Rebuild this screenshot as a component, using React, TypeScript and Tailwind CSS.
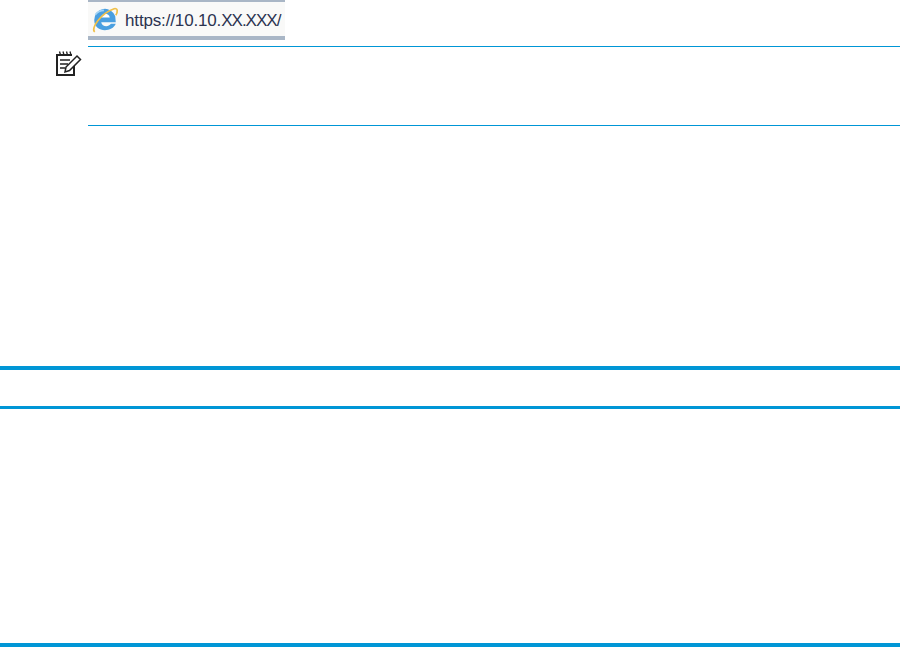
export default function App() {
  return (
    <div className="w-[900px] h-[647px] bg-white overflow-hidden flex flex-col font-['Liberation_Sans',sans-serif]">
      <div className="flex flex-col items-start pl-[88px] h-[366px]">
        {/* address bar screenshot */}
        <div className="w-[197px] h-[40px] flex flex-col bg-[#f9f9f8]">
          <div className="h-[2px] bg-[#a9b6c6]" />
          <div className="flex-1 flex items-center gap-[6px] pl-[3px] overflow-hidden">
            <svg width="28" height="28" viewBox="0 0 26 26" className="shrink-0">
              <path d="M3 14a10 10 0 0 1 19.500-3.500L23 16H9.500c.5 4 6.500 5 9 1.500H23C19.500 26 3 26 3 14Z" fill="#4a9fe0" />
              <path d="M9.500 11.500c.5-4.500 7-4.500 8 0Z" fill="#fff" />
              <path d="M4 9a10 10 0 0 1 8-4" fill="none" stroke="#a6d4f5" strokeWidth="1.500" />
              <path d="M3.500 25c-4-3 5-17 18-21.500 3.500-1 3.500 3 1.500 6" fill="none" stroke="#efc04a" strokeWidth="1.600" />
            </svg>
            <span className="text-[17px] leading-none text-[#2b3350] whitespace-nowrap tracking-[-0.15px] mt-[2px]">
              https://10.10.<span className="tracking-[-1px]">XX.XXX</span>/
            </span>
          </div>
          <div className="h-[4px] bg-[#a9b6c6]" />
        </div>
        <div className="mt-[6px] w-full flex">
          {/* note icon */}
          <div className="w-[36px] -ml-[36px] shrink-0 pl-[3px] pt-[4px]">
            <svg width="28" height="26" viewBox="0 0 28 26" fill="none" stroke="#222">
              <path d="M17 5H2v20h17V14" strokeWidth="2" />
              <path d="M4.500 1.500l1 3.500M8 1.500l1 3.500M11.500 1.500l1 3.500M15 1.500l1 3.500" strokeWidth="1.300" />
              <path d="M5 10h10M5 14h8M5 18h5" strokeWidth="1.500" />
              <path d="M10 22l1-5 11-11 3.500 3.500-11 11Z" strokeWidth="1.500" fill="#fff" />
            </svg>
          </div>
          <div className="flex-1 h-[80px] border-t border-b border-[#0096d6]" />
        </div>
      </div>
      <div className="h-[4px] bg-[#0096d6]" />
      <div className="h-[36px]" />
      <div className="h-[3px] bg-[#0096d6]" />
      <div className="flex-1" />
      <div className="h-[4px] bg-[#0096d6]" />
    </div>
  );
}
